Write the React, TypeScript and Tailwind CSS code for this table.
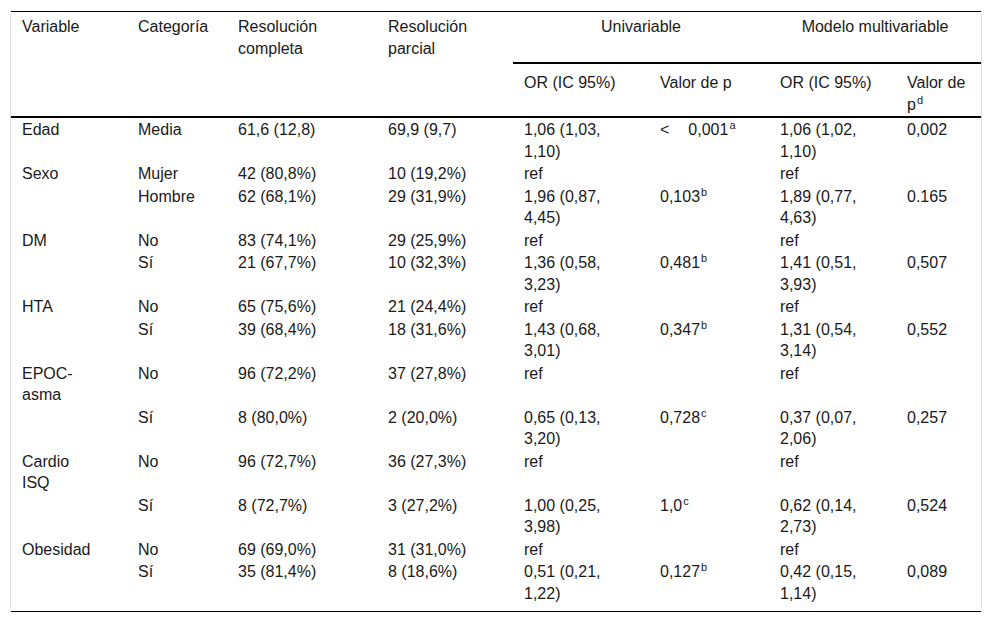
import React from "react";

type Row = {
  v?: React.ReactNode;
  c: string;
  rc: string;
  rp: string;
  or1: [string, string?];
  p1?: React.ReactNode;
  or2: [string, string?];
  p2?: string;
};

const Sup = ({ t }: { t: string }) => (
  <sup className="text-[11px] relative top-[-6px] ml-px">{t}</sup>
);

const rows: Row[] = [
  {
    v: "Edad",
    c: "Media",
    rc: "61,6 (12,8)",
    rp: "69,9 (9,7)",
    or1: ["1,06 (1,03,", "1,10)"],
    p1: (
      <>
        <span className="mr-[19px]">&lt;</span>0,001
        <Sup t="a" />
      </>
    ),
    or2: ["1,06 (1,02,", "1,10)"],
    p2: "0,002",
  },
  { v: "Sexo", c: "Mujer", rc: "42 (80,8%)", rp: "10 (19,2%)", or1: ["ref"], or2: ["ref"] },
  {
    c: "Hombre",
    rc: "62 (68,1%)",
    rp: "29 (31,9%)",
    or1: ["1,96 (0,87,", "4,45)"],
    p1: (
      <>
        0,103
        <Sup t="b" />
      </>
    ),
    or2: ["1,89 (0,77,", "4,63)"],
    p2: "0.165",
  },
  { v: "DM", c: "No", rc: "83 (74,1%)", rp: "29 (25,9%)", or1: ["ref"], or2: ["ref"] },
  {
    c: "Sí",
    rc: "21 (67,7%)",
    rp: "10 (32,3%)",
    or1: ["1,36 (0,58,", "3,23)"],
    p1: (
      <>
        0,481
        <Sup t="b" />
      </>
    ),
    or2: ["1,41 (0,51,", "3,93)"],
    p2: "0,507",
  },
  { v: "HTA", c: "No", rc: "65 (75,6%)", rp: "21 (24,4%)", or1: ["ref"], or2: ["ref"] },
  {
    c: "Sí",
    rc: "39 (68,4%)",
    rp: "18 (31,6%)",
    or1: ["1,43 (0,68,", "3,01)"],
    p1: (
      <>
        0,347
        <Sup t="b" />
      </>
    ),
    or2: ["1,31 (0,54,", "3,14)"],
    p2: "0,552",
  },
  {
    v: (
      <>
        EPOC-
        <br />
        asma
      </>
    ),
    c: "No",
    rc: "96 (72,2%)",
    rp: "37 (27,8%)",
    or1: ["ref"],
    or2: ["ref"],
  },
  {
    c: "Sí",
    rc: "8 (80,0%)",
    rp: "2 (20,0%)",
    or1: ["0,65 (0,13,", "3,20)"],
    p1: (
      <>
        0,728
        <Sup t="c" />
      </>
    ),
    or2: ["0,37 (0,07,", "2,06)"],
    p2: "0,257",
  },
  {
    v: (
      <>
        Cardio
        <br />
        ISQ
      </>
    ),
    c: "No",
    rc: "96 (72,7%)",
    rp: "36 (27,3%)",
    or1: ["ref"],
    or2: ["ref"],
  },
  {
    c: "Sí",
    rc: "8 (72,7%)",
    rp: "3 (27,2%)",
    or1: ["1,00 (0,25,", "3,98)"],
    p1: (
      <>
        1,0
        <Sup t="c" />
      </>
    ),
    or2: ["0,62 (0,14,", "2,73)"],
    p2: "0,524",
  },
  { v: "Obesidad", c: "No", rc: "69 (69,0%)", rp: "31 (31,0%)", or1: ["ref"], or2: ["ref"] },
  {
    c: "Sí",
    rc: "35 (81,4%)",
    rp: "8 (18,6%)",
    or1: ["0,51 (0,21,", "1,22)"],
    p1: (
      <>
        0,127
        <Sup t="b" />
      </>
    ),
    or2: ["0,42 (0,15,", "1,14)"],
    p2: "0,089",
  },
];

const OR = ({ v }: { v: [string, string?] }) => (
  <>
    {v[0]}
    {v[1] ? (
      <>
        <br />
        {v[1]}
      </>
    ) : null}
  </>
);

export default function App() {
  const grid =
    "grid grid-cols-[116px_100px_150px_136px_136px_120px_127px_85px]";
  const cell = "px-[11px] pt-px";
  return (
    <div className="w-[992px] h-[623px] bg-white pt-[11px] px-[10px] font-['Liberation_Sans',Arial,sans-serif] text-[16px] leading-[21.5px] text-[#1a1a1a]">
      <div className="border-x border-[#e2e2e2]">
        <div className="border-t border-black">
          {/* Header */}
          <div className={`${grid} grid-rows-[52px_52px] border-b-2 border-black`}>
            <div className="row-span-2 px-[11px] pt-[4px]">Variable</div>
            <div className="row-span-2 px-[11px] pt-[4px]">Categoría</div>
            <div className="row-span-2 px-[11px] pt-[4px]">
              Resolución
              <br />
              completa
            </div>
            <div className="row-span-2 px-[11px] pt-[4px]">
              Resolución
              <br />
              parcial
            </div>
            <div className="col-span-2 px-[11px] pt-[4px] text-center border-b-2 border-black">
              Univariable
            </div>
            <div className="col-span-2 px-[11px] pt-[4px] text-center border-b-2 border-black">
              Modelo multivariable
            </div>
            <div className="px-[11px] pt-[8px]">OR (IC 95%)</div>
            <div className="px-[11px] pt-[8px]">Valor de p</div>
            <div className="px-[11px] pt-[8px]">OR (IC 95%)</div>
            <div className="px-[11px] pt-[8px]">
              Valor de
              <br />p<Sup t="d" />
            </div>
          </div>
          {/* Body */}
          <div className="pb-[7px] border-b border-black">
            {rows.map((r, i) => (
              <div key={i} className={grid}>
                <div className={cell}>{r.v}</div>
                <div className={cell}>{r.c}</div>
                <div className={cell}>{r.rc}</div>
                <div className={cell}>{r.rp}</div>
                <div className={cell}>
                  <OR v={r.or1} />
                </div>
                <div className={cell}>{r.p1}</div>
                <div className={cell}>
                  <OR v={r.or2} />
                </div>
                <div className={cell}>{r.p2}</div>
              </div>
            ))}
          </div>
        </div>
      </div>
    </div>
  );
}
